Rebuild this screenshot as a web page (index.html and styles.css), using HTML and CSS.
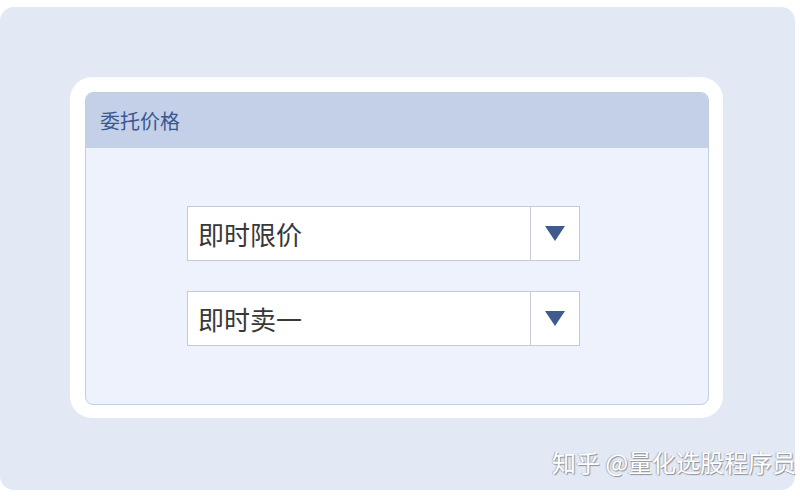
FILE: index.html
```html
<!DOCTYPE html>
<html lang="zh-CN">
<head>
  <meta charset="UTF-8">
  <meta name="viewport" content="width=device-width, initial-scale=1.0">
  <title>委托价格</title>
  <link rel="stylesheet" href="styles.css">
</head>
<body>
  <div class="stage">
    <div class="frame">
      <div class="panel">
        <div class="panel-head">委托价格</div>
        <div class="panel-body">
          <div class="select">
            <div class="select-text">即时限价</div>
            <div class="select-btn"><span class="arrow"></span></div>
          </div>
          <div class="select">
            <div class="select-text">即时卖一</div>
            <div class="select-btn"><span class="arrow"></span></div>
          </div>
        </div>
      </div>
    </div>
  </div>
  <div class="mark">知乎 @量化选股程序员</div>
</body>
</html>
```

FILE: styles.css
```css
html, body{
  margin: 0;
  padding: 0;
  background: #fff;
  overflow: hidden;
  font-family: "Noto Sans CJK SC", "Noto Sans", sans-serif;
}
.stage{
  box-sizing: border-box;
  width: 795px;
  height: 483px;
  margin-top: 7px;
  padding: 70px 0 0 70px;
  background: #e3e9f4;
  border-radius: 14px;
}
.frame{
  box-sizing: border-box;
  width: 653px;
  height: 341px;
  padding: 15px 14px 13px 15px;
  background: #fff;
  border-radius: 22px;
}
.panel{
  box-sizing: border-box;
  height: 100%;
  border: 1px solid #c3cde0;
  border-radius: 8px;
  overflow: hidden;
  background: #edf2fd;
  display: flex;
  flex-direction: column;
}
.panel-head{
  height: 55px;
  padding-left: 14px;
  display: flex;
  align-items: center;
  background: #c3d0e7;
  color: #3a5890;
  font-size: 20px;
}
.panel-body{
  padding: 58px 0 0 101px;
  display: flex;
  flex-direction: column;
  gap: 30px;
}
.select{
  box-sizing: border-box;
  width: 393px;
  height: 55px;
  display: flex;
  background: #fff;
  border: 1px solid #c4cad6;
}
.select-text{
  flex: 1;
  display: flex;
  align-items: center;
  padding-left: 10px;
  font-size: 26px;
  color: #383838;
}
.select-btn{
  width: 48px;
  border-left: 1px solid #c4cad6;
  display: flex;
  align-items: center;
  justify-content: center;
}
.arrow{
  width: 0;
  height: 0;
  border-left: 10px solid transparent;
  border-right: 10px solid transparent;
  border-top: 15px solid #3f5a8c;
}
.mark{
  position: absolute;
  left: 552px;
  top: 444px;
  white-space: nowrap;
  font-size: 24px;
  color: #fff;
  text-shadow: 1px 1px 1px #8a8f99, -1px 0 1px #b0b5c0;
}
```
